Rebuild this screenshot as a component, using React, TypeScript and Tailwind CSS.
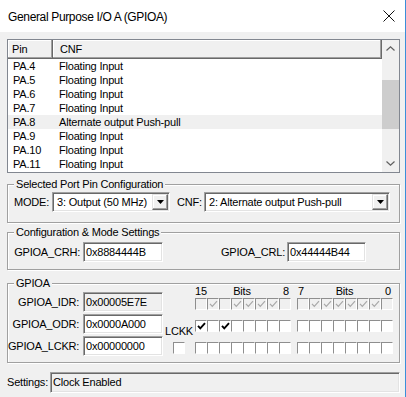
import React from 'react';

const pins = [
  { pin: 'PA.4', cnf: 'Floating Input' },
  { pin: 'PA.5', cnf: 'Floating Input' },
  { pin: 'PA.6', cnf: 'Floating Input' },
  { pin: 'PA.7', cnf: 'Floating Input' },
  { pin: 'PA.8', cnf: 'Alternate output Push-pull' },
  { pin: 'PA.9', cnf: 'Floating Input' },
  { pin: 'PA.10', cnf: 'Floating Input' },
  { pin: 'PA.11', cnf: 'Floating Input' },
];

// bits 15..0
const idrBits = [0, 1, 0, 1, 1, 1, 1, 0, 0, 1, 1, 1, 1, 1, 1, 0];
const odrBits = [1, 0, 1, 0, 0, 0, 0, 0, 0, 0, 0, 0, 0, 0, 0, 0];
const lckrBits = [0, 0, 0, 0, 0, 0, 0, 0, 0, 0, 0, 0, 0, 0, 0, 0];

const sunken =
  'border border-[#a0a0a0] border-r-white border-b-white shadow-[inset_1px_1px_0_#696969,inset_-1px_-1px_0_#e3e3e3]';

function CheckBox({ checked, disabled }: { checked?: boolean; disabled?: boolean }) {
  return (
    <div
      className={`w-[12px] h-[12px] flex items-center justify-center border border-[#8e8e8e] border-r-white border-b-white ${
        disabled ? 'bg-[#f0f0f0]' : 'bg-white'
      }`}
    >
      {checked && (
        <svg width="9" height="8" viewBox="0 0 9 8">
          <path
            d="M1 3.8 L3.3 6.3 L8 1.2"
            fill="none"
            stroke={disabled ? '#a8a8a8' : '#000'}
            strokeWidth={disabled ? 1.2 : 1.9}
          />
        </svg>
      )}
    </div>
  );
}

function BitRow({ bits, disabled }: { bits: number[]; disabled?: boolean }) {
  return (
    <div className="flex gap-[6px]">
      <div className="flex">
        {bits.slice(0, 8).map((b, i) => (
          <CheckBox key={i} checked={!!b} disabled={disabled} />
        ))}
      </div>
      <div className="flex">
        {bits.slice(8).map((b, i) => (
          <CheckBox key={i} checked={!!b} disabled={disabled} />
        ))}
      </div>
    </div>
  );
}

function GroupBox({ title, className, children }: { title: string; className: string; children: React.ReactNode }) {
  return (
    <div className={`relative ml-[7px] w-[393px] border border-[#a0a0a0] shadow-[inset_1px_1px_0_#fff,1px_1px_0_#fff] ${className}`}>
      <span className="absolute left-[6px] top-[-7px] px-[2px] bg-[#f0f0f0] leading-[13px] whitespace-nowrap">
        {title}
      </span>
      {children}
    </div>
  );
}

function Combo({ value, width }: { value: string; width: string }) {
  return (
    <div className={`${width} h-[20px] flex items-center bg-white ${sunken}`}>
      <span className="flex-1 pl-[4px] whitespace-nowrap leading-[13px]">{value}</span>
      <div className="w-[16px] h-[16px] mr-[1px] flex items-center justify-center bg-[#f0f0f0] border border-[#e3e3e3] border-r-[#696969] border-b-[#696969] shadow-[inset_-1px_-1px_0_#a0a0a0,inset_1px_1px_0_#fff]">
        <svg width="7" height="4" viewBox="0 0 7 4">
          <path d="M0 0 H7 L3.5 4 Z" fill="#000" />
        </svg>
      </div>
    </div>
  );
}

function Field({ value, width, readOnly }: { value: string; width: string; readOnly?: boolean }) {
  return (
    <div className={`${width} h-[20px] flex items-center pl-[2px] ${readOnly ? 'bg-[#f0f0f0]' : 'bg-white'} ${sunken}`}>
      <span className="leading-[13px] whitespace-nowrap">{value}</span>
    </div>
  );
}

export default function App() {
  return (
    <div className="w-[406px] h-[397px] overflow-hidden bg-[#f0f0f0] border-r border-[#3a8fd9] text-black text-[11px] tracking-[-0.2px] font-['Liberation_Sans',Arial,sans-serif]">
      {/* Title bar */}
      <div className="h-[32px] bg-white flex items-center justify-between pl-[8px] pr-[10px]">
        <span className="text-[12px] tracking-[-0.35px] pt-[1px]">General Purpose I/O A (GPIOA)</span>
        <svg width="12" height="12" viewBox="0 0 12 12">
          <path d="M0.5 0.5 L11.5 11.5 M11.5 0.5 L0.5 11.5" stroke="#111" strokeWidth="1" />
        </svg>
      </div>

      {/* Pin list */}
      <div className="mt-[7px] ml-[7px] w-[393px] h-[134px] border border-[#828790] bg-white flex">
        <div className="flex-1 flex flex-col">
          <div className="h-[19px] flex bg-[#f0f0f0]">
            <div className="w-[45px] pl-[4px] flex items-center border-r border-b border-[#696969] shadow-[inset_-1px_-1px_0_#a0a0a0,inset_1px_1px_0_#fff]">
              Pin
            </div>
            <div className="flex-1 pl-[7px] flex items-center border-r border-b border-[#696969] shadow-[inset_-1px_-1px_0_#a0a0a0,inset_1px_1px_0_#fff]">
              CNF
            </div>
          </div>
          {pins.map((p) => (
            <div
              key={p.pin}
              className={`h-[14px] flex items-center leading-[14px] ${p.pin === 'PA.8' ? 'bg-[#f0f0f0]' : ''}`}
            >
              <span className="w-[45px] pl-[5px]">{p.pin}</span>
              <span className="pl-[6px] whitespace-nowrap">{p.cnf}</span>
            </div>
          ))}
        </div>
        {/* Scrollbar */}
        <div className="w-[17px] flex flex-col bg-[#f0f0f0]">
          <div className="h-[17px] flex items-center justify-center">
            <svg width="9" height="5" viewBox="0 0 9 5">
              <path d="M0.5 4.5 L4.5 0.8 L8.5 4.5" fill="none" stroke="#606060" strokeWidth="1.2" />
            </svg>
          </div>
          <div className="h-[23px]" />
          <div className="h-[49px] bg-[#cdcdcd]" />
          <div className="flex-1" />
          <div className="h-[17px] flex items-center justify-center">
            <svg width="9" height="5" viewBox="0 0 9 5">
              <path d="M0.5 0.5 L4.5 4.2 L8.5 0.5" fill="none" stroke="#606060" strokeWidth="1.2" />
            </svg>
          </div>
        </div>
      </div>

      {/* Selected Port Pin Configuration */}
      <GroupBox title="Selected Port Pin Configuration" className="mt-[11px] h-[39px]">
        <div className="flex items-center pt-[7px] pl-[6px]">
          <span className="w-[38px] whitespace-nowrap">MODE:</span>
          <Combo value="3: Output (50 MHz)" width="w-[118px]" />
          <span className="w-[34px] pl-[7px] whitespace-nowrap">CNF:</span>
          <Combo value="2: Alternate output Push-pull" width="w-[186px]" />
        </div>
      </GroupBox>

      {/* Configuration & Mode Settings */}
      <GroupBox title="Configuration & Mode Settings" className="mt-[9px] h-[38px]">
        <div className="flex items-center pt-[9px]">
          <span className="w-[75px] pr-[3px] text-right whitespace-nowrap">GPIOA_CRH:</span>
          <Field value="0x8884444B" width="w-[80px]" />
          <span className="w-[124px] pr-[2px] text-right whitespace-nowrap">GPIOA_CRL:</span>
          <Field value="0x44444B44" width="w-[79px]" />
        </div>
      </GroupBox>

      {/* GPIOA */}
      <GroupBox title="GPIOA" className="mt-[13px] h-[80px]">
        <div className="flex">
          <div className="flex flex-col gap-[2px] pt-[8px]">
            {[
              { label: 'GPIOA_IDR:', value: '0x00005E7E', ro: true },
              { label: 'GPIOA_ODR:', value: '0x0000A000', ro: false },
              { label: 'GPIOA_LCKR:', value: '0x00000000', ro: false },
            ].map((r) => (
              <div key={r.label} className="flex items-center">
                <span className="w-[75px] pr-[4px] text-right whitespace-nowrap">{r.label}</span>
                <Field value={r.value} width="w-[80px]" readOnly={r.ro} />
              </div>
            ))}
          </div>
          <div className="w-[32px] flex flex-col items-center pt-[41px]">
            <span className="leading-[13px]">LCKK</span>
            <div className="mt-[4px]">
              <CheckBox />
            </div>
          </div>
          <div className="flex flex-col pt-[1px]">
            <div className="flex gap-[6px] h-[13px] leading-[13px]">
              <div className="w-[96px] grid grid-cols-3 pr-[2px]">
                <span>15</span>
                <span className="text-center">Bits</span>
                <span className="text-right">8</span>
              </div>
              <div className="w-[96px] grid grid-cols-3 pl-[1px] pr-[2px]">
                <span>7</span>
                <span className="text-center">Bits</span>
                <span className="text-right">0</span>
              </div>
            </div>
            <div className="flex flex-col gap-[10px]">
              <BitRow bits={idrBits} disabled />
              <BitRow bits={odrBits} />
              <BitRow bits={lckrBits} />
            </div>
          </div>
        </div>
      </GroupBox>

      {/* Status */}
      <div className="mt-[9px] ml-[7px] flex items-center">
        <span className="w-[43px] whitespace-nowrap">Settings:</span>
        <div className={`w-[350px] h-[21px] flex items-center pl-[2px] bg-[#f0f0f0] ${sunken}`}>
          <span className="leading-[13px]">Clock Enabled</span>
        </div>
      </div>
    </div>
  );
}
